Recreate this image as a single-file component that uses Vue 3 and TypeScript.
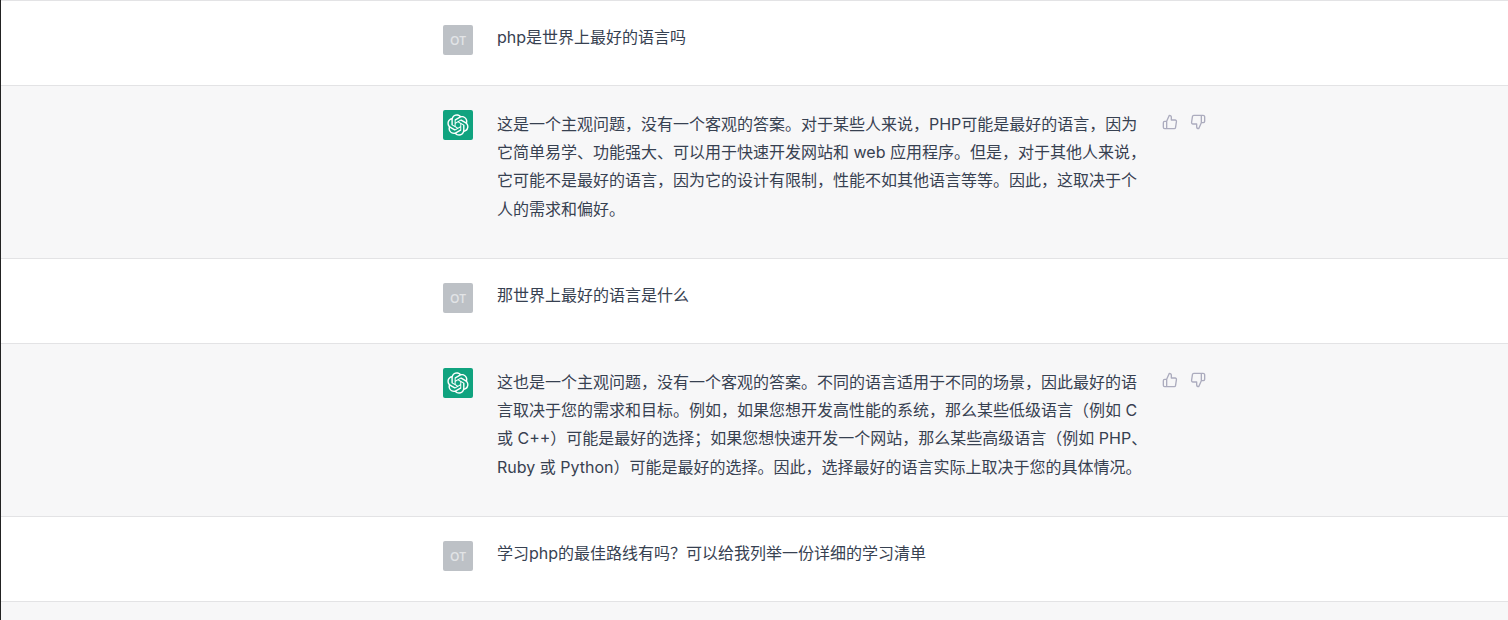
<script setup lang="ts">
interface Message {
  id: number;
  role: "user" | "bot";
  lines: string[];
}

const messages: Message[] = [
  { id: 1, role: "user", lines: ["php是世界上最好的语言吗"] },
  {
    id: 2,
    role: "bot",
    lines: [
      "这是一个主观问题，没有一个客观的答案。对于某些人来说，PHP可能是最好的语言，因为",
      "它简单易学、功能强大、可以用于快速开发网站和 web 应用程序。但是，对于其他人来说，",
      "它可能不是最好的语言，因为它的设计有限制，性能不如其他语言等等。因此，这取决于个",
      "人的需求和偏好。",
    ],
  },
  { id: 3, role: "user", lines: ["那世界上最好的语言是什么"] },
  {
    id: 4,
    role: "bot",
    lines: [
      "这也是一个主观问题，没有一个客观的答案。不同的语言适用于不同的场景，因此最好的语",
      "言取决于您的需求和目标。例如，如果您想开发高性能的系统，那么某些低级语言（例如 C",
      "或 C++）可能是最好的选择；如果您想快速开发一个网站，那么某些高级语言（例如 PHP、",
      "Ruby 或 Python）可能是最好的选择。因此，选择最好的语言实际上取决于您的具体情况。",
    ],
  },
  { id: 5, role: "user", lines: ["学习php的最佳路线有吗？可以给我列举一份详细的学习清单"] },
];

const logoPath =
  "M37.5324 16.8707C37.9808 15.5241 38.1363 14.0974 37.9886 12.6859C37.8409 11.2744 37.3934 9.91076 36.676 8.68622C35.6126 6.83404 33.9882 5.3676 32.0373 4.4985C30.0864 3.62941 27.9098 3.40259 25.8215 3.85078C24.8796 2.7893 23.7219 1.94125 22.4257 1.36341C21.1295 0.785575 19.7249 0.491269 18.3058 0.500197C16.1708 0.495044 14.0893 1.16803 12.3614 2.42214C10.6335 3.67624 9.34853 5.44666 8.6917 7.47815C7.30085 7.76286 5.98686 8.3414 4.8377 9.17505C3.68854 10.0087 2.73073 11.0782 2.02839 12.312C0.956464 14.1591 0.498905 16.2988 0.721698 18.4228C0.944492 20.5467 1.83612 22.5449 3.268 24.1293C2.81966 25.4759 2.66413 26.9026 2.81182 28.3141C2.95951 29.7256 3.40701 31.0892 4.12437 32.3138C5.18791 34.1659 6.8123 35.6322 8.76321 36.5013C10.7141 37.3704 12.8907 37.5973 14.9789 37.1492C15.9208 38.2107 17.0786 39.0587 18.3747 39.6366C19.6709 40.2144 21.0755 40.5087 22.4946 40.4998C24.6307 40.5054 26.7133 39.8321 28.4418 38.5772C30.1704 37.3223 31.4556 35.5506 32.1119 33.5179C33.5027 33.2332 34.8167 32.6547 35.9659 31.821C37.115 30.9874 38.0728 29.9178 38.7752 28.684C39.8458 26.8371 40.3023 24.6979 40.0789 22.5748C39.8556 20.4517 38.9639 18.4544 37.5324 16.8707ZM22.4978 37.8849C20.7443 37.8874 19.0459 37.2733 17.6994 36.1501C17.7601 36.117 17.8666 36.0586 17.936 36.0161L25.9004 31.4156C26.1003 31.3019 26.2663 31.137 26.3813 30.9378C26.4964 30.7386 26.5563 30.5124 26.5549 30.2825V19.0542L29.9213 20.998C29.9389 21.0068 29.9541 21.0198 29.9656 21.0359C29.977 21.052 29.9842 21.0707 29.9867 21.0902V30.3889C29.9842 32.375 29.1946 34.2791 27.7909 35.6841C26.3872 37.0892 24.4838 37.8806 22.4978 37.8849ZM6.39227 31.0064C5.51397 29.4888 5.19742 27.7107 5.49804 25.9832C5.55718 26.0187 5.66048 26.0818 5.73461 26.1244L13.699 30.7248C13.8975 30.8408 14.1233 30.902 14.3532 30.902C14.583 30.902 14.8088 30.8408 15.0073 30.7248L24.731 25.1103V28.9979C24.7321 29.0177 24.7283 29.0376 24.7199 29.0556C24.7115 29.0736 24.6988 29.0893 24.6829 29.1012L16.6317 33.7497C14.9096 34.7416 12.8643 35.0097 10.9447 34.4954C9.02506 33.9811 7.38785 32.7263 6.39227 31.0064ZM4.29707 13.6194C5.17156 12.0998 6.55279 10.9364 8.19885 10.3327C8.19885 10.4013 8.19491 10.5228 8.19491 10.6071V19.808C8.19351 20.0378 8.25334 20.2638 8.36823 20.4629C8.48312 20.6619 8.64893 20.8267 8.84863 20.9404L18.5723 26.5542L15.206 28.4979C15.1894 28.5089 15.1703 28.5155 15.1505 28.5173C15.1307 28.5191 15.1107 28.516 15.0924 28.5082L7.04046 23.8557C5.32135 22.8601 4.06716 21.2235 3.55289 19.3046C3.03862 17.3858 3.30624 15.3413 4.29707 13.6194ZM31.955 20.0556L22.2312 14.4411L25.5976 12.4981C25.6142 12.4872 25.6333 12.4805 25.6531 12.4787C25.6729 12.4769 25.6928 12.4801 25.7111 12.4879L33.7631 17.1364C34.9967 17.849 36.0017 18.8982 36.6606 20.1613C37.3194 21.4244 37.6047 22.849 37.4832 24.2684C37.3617 25.6878 36.8382 27.0432 35.9743 28.1759C35.1103 29.3086 33.9415 30.1717 32.6047 30.6641C32.6047 30.5947 32.6047 30.4733 32.6047 30.3889V21.188C32.6066 20.9586 32.5474 20.7328 32.4332 20.5338C32.319 20.3348 32.1539 20.1698 31.955 20.0556ZM35.3055 15.0128C35.2464 14.9765 35.1431 14.9142 35.069 14.8717L27.1045 10.2712C26.906 10.1554 26.6803 10.0943 26.4504 10.0943C26.2206 10.0943 25.9948 10.1554 25.7963 10.2712L16.0726 15.8858V11.9982C16.0715 11.9783 16.0753 11.9585 16.0837 11.9405C16.0921 11.9225 16.1048 11.9068 16.1207 11.8949L24.1719 7.25025C25.4053 6.53903 26.8121 6.19376 28.2299 6.25482C29.6477 6.31589 31.0189 6.78077 32.1832 7.59508C33.3475 8.40939 34.2574 9.53945 34.8064 10.8482C35.3555 12.1569 35.5209 13.5909 35.2837 14.9897L35.3055 15.0128ZM14.2424 21.9419L10.8752 19.9981C10.8576 19.9893 10.8423 19.9763 10.8309 19.9602C10.8195 19.9441 10.8122 19.9254 10.8098 19.9058V10.6071C10.8107 9.18295 11.2173 7.78848 11.9819 6.58696C12.7466 5.38544 13.8377 4.42659 15.1275 3.82264C16.4173 3.21869 17.8524 2.99464 19.2649 3.1767C20.6775 3.35876 22.0089 3.93941 23.1034 4.85067C23.0427 4.88379 22.937 4.94215 22.8668 4.98473L14.9024 9.58517C14.7025 9.69878 14.5366 9.86356 14.4215 10.0626C14.3065 10.2616 14.2466 10.4877 14.2479 10.7175L14.2424 21.9419ZM16.071 17.9991L20.4018 15.4978L24.7325 17.9975V22.9985L20.4018 25.4983L16.071 22.9985V17.9991Z";
</script>

<template>
  <div class="page">
    <div v-for="m in messages" :key="m.id" class="row" :class="m.role">
      <div class="inner">
        <div v-if="m.role === 'user'" class="avatar">OT</div>
        <div v-else class="avatar logo">
          <svg width="22" height="22" viewBox="0 0 41 41" fill="none">
            <path :d="logoPath" fill="#fff" />
          </svg>
        </div>
        <div class="text">
          <div v-for="(line, i) in m.lines" :key="i" class="line">{{ line }}</div>
        </div>
        <div v-if="m.role === 'bot'" class="actions">
          <svg viewBox="0 0 24 24" width="16" height="16" fill="none" stroke="currentColor" stroke-width="2" stroke-linecap="round" stroke-linejoin="round">
            <path d="M14 9V5a3 3 0 0 0-3-3l-4 9v11h11.28a2 2 0 0 0 2-1.7l1.38-9a2 2 0 0 0-2-2.3zM7 22H4a2 2 0 0 1-2-2v-7a2 2 0 0 1 2-2h3" />
          </svg>
          <svg viewBox="0 0 24 24" width="16" height="16" fill="none" stroke="currentColor" stroke-width="2" stroke-linecap="round" stroke-linejoin="round">
            <path d="M10 15v4a3 3 0 0 0 3 3l4-9V2H5.72a2 2 0 0 0-2 1.7l-1.38 9a2 2 0 0 0 2 2.3zm7-13h2.67A2.31 2.31 0 0 1 22 4v7a2.31 2.31 0 0 1-2.33 2H17" />
          </svg>
        </div>
      </div>
    </div>
    <div class="row bot tail"></div>
  </div>
</template>

<style>
html,
body {
  margin: 0;
  background: #fff;
}
</style>

<style scoped>
.page {
  height: 620px;
  overflow: hidden;
  border-left: 1px solid #222;
  font-family: "Inter", "Noto Sans CJK SC", sans-serif;
  font-size: 16px;
  color: #374151;
}

.row {
  border-top: 1px solid #e3e3e5;
  padding: 24px 0;
}

.row.bot {
  background: #f7f7f8;
}

.tail {
  height: 100px;
}

.inner {
  display: flex;
  gap: 24px;
  width: 768px;
  margin-left: 442px;
}

.avatar {
  flex: none;
  width: 30px;
  height: 30px;
  border-radius: 2px;
  background: #bdc1c6;
  color: #e2e4e6;
  font-family: "Open Sans", sans-serif;
  font-size: 12px;
  font-weight: 600;
  display: flex;
  align-items: center;
  justify-content: center;
}

.avatar.logo {
  background: #10a37f;
}

.text {
  width: 641px;
  flex: none;
}

.user .text {
  min-height: 36px;
  line-height: 24px;
}

.bot .text {
  line-height: 28.2px;
  height: 124px;
}

.line {
  white-space: nowrap;
}

.actions {
  display: flex;
  gap: 12px;
  padding-top: 4px;
  color: #acacbe;
  align-items: flex-start;
}
</style>
